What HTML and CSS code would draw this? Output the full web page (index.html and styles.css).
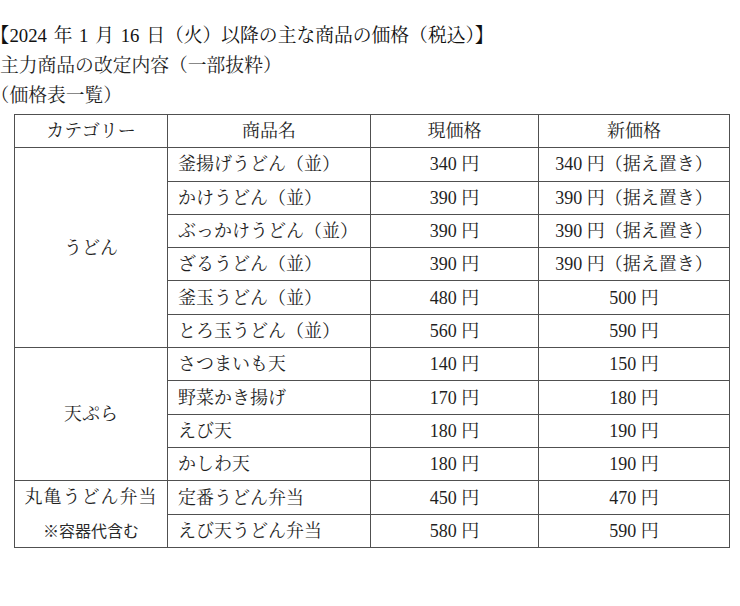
FILE: index.html
```html
<!DOCTYPE html>
<html lang="ja">
<head>
<meta charset="utf-8">
<title>価格表</title>
<link rel="stylesheet" href="styles.css">
</head>
<body>
<div class="intro">
  <p class="line title"><span class="halt">【</span>2024 年 1 月 16 日（火）以降の主な商品の価格（税込）<span class="halt">】</span></p>
  <p class="line">主力商品の改定内容（一部抜粋）</p>
  <p class="line"><span class="halt">（</span>価格表一覧<span class="halt">）</span></p>
</div>
<table class="prices">
  <colgroup>
    <col class="c-cat"><col class="c-name"><col class="c-old"><col class="c-new">
  </colgroup>
  <thead>
    <tr><th>カテゴリー</th><th>商品名</th><th>現価格</th><th>新価格</th></tr>
  </thead>
  <tbody>
    <tr><td class="cat" rowspan="6">うどん</td><td class="name">釜揚げうどん（並）</td><td class="price">340 円</td><td class="price">340 円（据え置き）</td></tr>
    <tr><td class="name">かけうどん（並）</td><td class="price">390 円</td><td class="price">390 円（据え置き）</td></tr>
    <tr><td class="name">ぶっかけうどん（並）</td><td class="price">390 円</td><td class="price">390 円（据え置き）</td></tr>
    <tr><td class="name">ざるうどん（並）</td><td class="price">390 円</td><td class="price">390 円（据え置き）</td></tr>
    <tr><td class="name">釜玉うどん（並）</td><td class="price">480 円</td><td class="price">500 円</td></tr>
    <tr><td class="name">とろ玉うどん（並）</td><td class="price">560 円</td><td class="price">590 円</td></tr>
    <tr><td class="cat" rowspan="4">天ぷら</td><td class="name">さつまいも天</td><td class="price">140 円</td><td class="price">150 円</td></tr>
    <tr><td class="name">野菜かき揚げ</td><td class="price">170 円</td><td class="price">180 円</td></tr>
    <tr><td class="name">えび天</td><td class="price">180 円</td><td class="price">190 円</td></tr>
    <tr><td class="name">かしわ天</td><td class="price">180 円</td><td class="price">190 円</td></tr>
    <tr><td class="cat bento" rowspan="2"><div class="bento-main">丸亀うどん弁当</div><div class="bento-note">※容器代含む</div></td><td class="name">定番うどん弁当</td><td class="price">450 円</td><td class="price">470 円</td></tr>
    <tr><td class="name">えび天うどん弁当</td><td class="price">580 円</td><td class="price">590 円</td></tr>
  </tbody>
</table>
</body>
</html>
```
FILE: styles.css
```css
html, body {
  margin: 0;
  padding: 0;
  background: #ffffff;
}
body {
  padding-top: 21px;
  font-family: "Liberation Serif", "Noto Serif CJK JP", "Noto Sans CJK JP", serif;
  font-size: 18px;
  color: #1f1f1f;
}
.intro {
  display: flex;
  flex-direction: column;
}
.line {
  margin: 0;
  font-size: 18.8px;
  line-height: 30px;
  height: 30px;
  white-space: nowrap;
}
.title {
  color: #111;
  word-spacing: 2px;
}
.halt {
  font-feature-settings: "halt";
}
.prices {
  margin: 3px 0 0 14px;
  border-collapse: collapse;
  table-layout: fixed;
  width: 715px;
}
.c-cat { width: 153px; }
.c-name { width: 203px; }
.c-old { width: 168px; }
.c-new { width: 191px; }
.prices th,
.prices td {
  border: 1px solid #505050;
  height: 32.3px;
  padding: 0;
  font-weight: normal;
  line-height: 20px;
  white-space: nowrap;
}
.prices th {
  text-align: center;
}
.cat {
  text-align: center;
  vertical-align: middle;
}
.name {
  text-align: left;
  padding-left: 10px !important;
}
.price {
  text-align: center;
}
.bento {
  vertical-align: top;
}
.bento-main {
  height: 33px;
  line-height: 33px;
  letter-spacing: 1px;
}
.bento-note {
  height: 33px;
  line-height: 33px;
  font-family: "Noto Sans CJK JP", sans-serif;
  font-size: 16px;
  color: #2a2a2a;
}
```
